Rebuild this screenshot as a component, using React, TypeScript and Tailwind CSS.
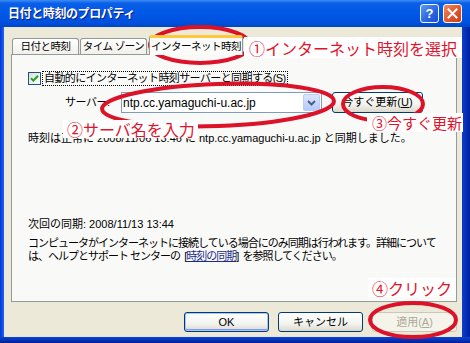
const jp = "font-['Liberation_Sans','Noto_Sans_CJK_JP',sans-serif]";
const note = "font-['Noto_Sans_CJK_JP',sans-serif] leading-[18px] text-[#e0142c] bg-white whitespace-nowrap";

function XpButton({ label, isDefault, disabled }: { label: React.ReactNode; isDefault?: boolean; disabled?: boolean }) {
  return (
    <div
      className={`w-[85px] h-[20px] rounded-[3px] border flex items-center justify-center text-[11px] leading-none ${
        disabled
          ? 'border-[#c9c7ba] bg-[#f5f4ea] text-[#aca899]'
          : 'border-[#003c74] bg-[linear-gradient(#ffffff,#f3f3ef_60%,#dcd8cb)] text-black'
      } ${isDefault ? 'shadow-[inset_0_0_0_1px_#a9c6f5,inset_0_-1px_0_1px_#7d9cef]' : ''}`}
    >
      {label}
    </div>
  );
}

export default function App() {
  return (
    <div className={`relative w-[470px] h-[343px] overflow-hidden flex flex-col bg-[#0831d9] ${jp}`}>
      {/* title bar */}
      <div className="h-[27px] shrink-0 flex items-center pl-[8px] pr-[8px] bg-[linear-gradient(#3d8cf5,#0a5fe8_12%,#0058e6_50%,#0050dc_85%,#0046c4)]">
        <span className="text-white font-bold text-[12px] tracking-[-0.4px] leading-none [text-shadow:1px_1px_#0a1e8a]">
          日付と時刻のプロパティ
        </span>
        <div className="ml-auto flex gap-[4px]">
          <div className="w-[19px] h-[19px] rounded-[3px] border border-white bg-[linear-gradient(135deg,#5a9cf8,#2a63e0_60%,#1c4fd0)] flex items-center justify-center text-white font-bold text-[13px] leading-none font-['Liberation_Sans',sans-serif]">
            ?
          </div>
          <div className="w-[19px] h-[19px] rounded-[3px] border border-white bg-[linear-gradient(135deg,#f08a63,#e0552a_55%,#c8401c)] flex items-center justify-center">
            <svg width="11" height="11" viewBox="0 0 11 11">
              <path d="M1.5 1.5 L9.5 9.5 M9.5 1.5 L1.5 9.5" stroke="white" strokeWidth="2" strokeLinecap="square" />
            </svg>
          </div>
        </div>
      </div>

      <div className="flex-1 flex min-h-0">
        <div className="w-[4px] shrink-0 bg-[linear-gradient(90deg,#0831d9,#166aee)]" />
        <div className="flex-1 min-w-0 overflow-hidden bg-[#ece9d8] flex flex-col pl-[7px] pr-[5px] pt-[8px]">
          {/* tabs */}
          <div className="h-[19px] shrink-0 flex items-end pl-[1px] text-[10.5px] tracking-[-0.5px] text-black whitespace-nowrap">
            <div className="w-[67px] h-[16px] border border-b-0 border-[#919b9c] rounded-t-[3px] bg-[linear-gradient(#ffffff,#f1f0ea)] flex items-center justify-center leading-none">
              日付と時刻
            </div>
            <div className="w-[67px] h-[16px] ml-[1px] border border-b-0 border-[#919b9c] rounded-t-[3px] bg-[linear-gradient(#ffffff,#f1f0ea)] flex items-center justify-center leading-none">
              タイム ゾーン
            </div>
            <div className="relative z-10 w-[94px] h-[20px] -mb-[1px] ml-[2px] border border-b-0 border-[#919b9c] border-t-[3px] border-t-[#ffc83c] rounded-t-[3px] bg-[#fbfbf9] flex items-center justify-center leading-none">
              インターネット時刻
            </div>
          </div>

          {/* panel */}
          <div className="h-[248px] shrink-0 border border-[#919b9c] bg-[#f9f9f7] pl-[16px] pt-[16px] text-[11px] text-black">
            <div className="h-[15px] flex items-center">
              <div className="w-[13px] h-[13px] border border-[#1c5180] bg-[linear-gradient(135deg,#dcdcd7,#ffffff)] flex items-center justify-center">
                <svg width="9" height="9" viewBox="0 0 9 9">
                  <path d="M1 4.2 L3.4 6.6 L8 1.8" fill="none" stroke="#21a121" strokeWidth="2" />
                </svg>
              </div>
              <div className="ml-[1px] h-[15px] px-[1px] border border-dotted border-black flex items-center leading-none whitespace-nowrap tracking-[-0.6px]">
                自動的にインターネット時刻サーバーと同期する(<span className="underline">S</span>)
              </div>
            </div>

            <div className="mt-[6px] h-[21px] flex items-center">
              <span className="ml-[37px] w-[56px] leading-none tracking-[-0.5px]">サーバー:</span>
              <div className="w-[201px] h-[21px] border border-[#7f9db9] bg-white flex items-center">
                <span className="pl-[1px] flex-1 leading-none text-[12px]">ntp.cc.yamaguchi-u.ac.jp</span>
                <div className="w-[17px] h-[17px] mr-[1px] rounded-[2px] border border-[#b9ccf7] bg-[linear-gradient(#dbe6fd,#b6cbf9)] flex items-center justify-center">
                  <svg width="9" height="6" viewBox="0 0 9 6">
                    <path d="M1 1 L4.5 4.5 L8 1" fill="none" stroke="#4d6185" strokeWidth="2" />
                  </svg>
                </div>
              </div>
              <div className="ml-[10px] w-[91px] h-[21px] rounded-[3px] border border-[#003c74] bg-[linear-gradient(#ffffff,#f3f3ef_60%,#dcd8cb)] flex items-center justify-center leading-none">
                今すぐ更新(<span className="underline">U</span>)
              </div>
            </div>

            <div className="mt-[18px] leading-[15px] whitespace-nowrap">
              時刻は正常に 2008/11/06 13:46 に ntp.cc.yamaguchi-u.ac.jp と同期しました。
            </div>

            <div className="mt-[71px] leading-[15px] whitespace-nowrap">次回の同期: 2008/11/13 13:44</div>

            <div className="mt-[5px] leading-[13px] whitespace-nowrap tracking-[-1px]">
              コンピュータがインターネットに接続している場合にのみ同期は行われます。詳細について
              <br />
              は、ヘルプとサポート センターの&nbsp; [<span className="text-[#1c2a8a] underline">時刻の同期</span>]&nbsp; を参照してください。
            </div>
          </div>

          {/* buttons */}
          <div className="mt-[10px] flex justify-end gap-[9px]">
            <XpButton label="OK" isDefault />
            <XpButton label="キャンセル" />
            <XpButton label={<>適用(<span className="underline">A</span>)</>} disabled />
          </div>
        </div>
        <div className="w-[8px] shrink-0 bg-[linear-gradient(90deg,#0a3fd0,#001f9a)]" />
      </div>
      <div className="h-[6px] shrink-0 bg-[linear-gradient(#0a45d8,#001e98)]" />

      {/* red annotation marks */}
      <svg className="absolute left-0 top-0 pointer-events-none" width="470" height="343" viewBox="0 0 470 343">
        <g fill="none" stroke="#dc1229" strokeWidth="4">
          <ellipse cx="200" cy="45" rx="50" ry="18" />
          <ellipse cx="218" cy="105" rx="116" ry="21" transform="rotate(-2 218 105)" />
          <ellipse cx="383" cy="104" rx="40" ry="17" />
          <ellipse cx="413" cy="320" rx="43" ry="17" />
        </g>
      </svg>

      <div className={`absolute left-[244px] top-[37px] w-[218px] h-[21px] pl-[5px] flex items-center text-[16px] ${note}`}>
        ①インターネット時刻を選択
      </div>
      <div className={`absolute left-[63px] top-[120px] w-[135px] h-[18px] pl-[4px] flex items-center text-[16px] ${note}`}>
        ②サーバ名を入力
      </div>
      <div className={`absolute left-[367px] top-[113px] w-[96px] h-[19px] pl-[5px] flex items-center text-[15px] ${note}`}>
        ③今すぐ更新
      </div>
      <div className={`absolute left-[368px] top-[278px] w-[88px] h-[19px] pl-[4px] flex items-center text-[16px] ${note}`}>
        ④クリック
      </div>
    </div>
  );
}
